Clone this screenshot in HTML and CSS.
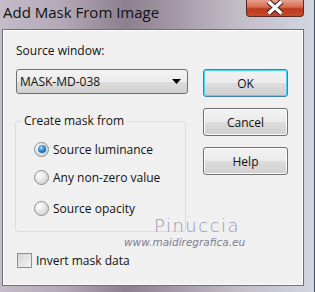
FILE: index.html
```html
<!DOCTYPE html>
<html>
<head>
<meta charset="utf-8">
<link rel="stylesheet" href="styles.css">
</head>
<body>
<div class="window">
  <div class="titlebar">
    <div class="title">Add Mask From Image</div>
    <div class="close"><svg width="20" height="15" viewBox="0 0 20 15"><path d="M3.5 1.5 L16.5 13.5 M16.5 1.5 L3.5 13.5" stroke="#3e2622" stroke-width="5.5"/><path d="M3.5 1.5 L16.5 13.5 M16.5 1.5 L3.5 13.5" stroke="#ffffff" stroke-width="3.2"/></svg></div>
  </div>
  <div class="panel">
    <div class="left">
      <div class="label">Source window:</div>
      <div class="select"><span>MASK-MD-038</span><svg class="arrow" width="9" height="5" viewBox="0 0 9 5"><path d="M0 0 H9 L4.5 5 Z" fill="#000"/></svg></div>
      <fieldset class="group">
        <legend>Create mask from</legend>
        <div class="opt o1"><span class="radio checked"></span>Source luminance</div>
        <div class="opt o2"><span class="radio"></span>Any non-zero value</div>
        <div class="opt o3"><span class="radio"></span>Source opacity</div>
      </fieldset>
      <div class="check"><span class="box"></span>Invert mask data</div>
    </div>
    <div class="right">
      <div class="btn default">OK</div>
      <div class="btn">Cancel</div>
      <div class="btn">Help</div>
    </div>
    <div class="wm1">Pinuccia</div>
    <div class="wm2">www.maidiregrafica.eu</div>
  </div>
</div>
</body>
</html>
```
FILE: styles.css
```css
html, body { margin: 0; padding: 0; }
body {
  width: 315px; height: 292px; overflow: hidden;
  font-family: "Open Sans", "Noto Sans", sans-serif;
  background: linear-gradient(90deg, #6e5563 0%, #7a5a68 40%, #8aa4c4 75%, #9fc0e0 100%);
}
.window {
  width: 315px; height: 292px;
  display: flex; flex-direction: column;
  background:
    linear-gradient(90deg, #c4bcc8 0%, #b4a8b6 20%, #8c7f8e 40%, #a397a6 55%, #c0bcc6 75%, #d2d6e0 100%);
  border-right: 1px solid #40505e;
  box-sizing: border-box;
}
.titlebar {
  height: 29px; flex: none;
  display: flex; justify-content: space-between; align-items: flex-start;
}
.title {
  font-size: 15px; color: #111; padding: 2px 0 0 3px; line-height: 20px;
}
.close {
  width: 58px; height: 17px; margin-right: 10px;
  background: linear-gradient(180deg, #e7a08f 0%, #d5694f 45%, #bc3a1e 55%, #c84a2c 100%);
  border: 1px solid #5a2a22; border-top: none;
  border-radius: 0 0 4px 4px;
  box-sizing: border-box;
  display: flex; justify-content: center; align-items: flex-start;
}
.panel {
  position: relative;
  margin: 0 10px 0 2px;
  height: 257px; flex: none;
  background: #f0f0f0;
  border: 1px solid #6f6f78;
  box-shadow: inset 0 0 0 1px #ffffff;
  box-sizing: border-box;
  display: flex;
  padding: 13px 0 0 13px;
  font-size: 12px; color: #111;
}
.left { width: 172px; display: flex; flex-direction: column; }
.label { line-height: 16px; height: 16px; }
.select {
  margin-top: 10px; height: 25px; box-sizing: border-box;
  border: 1px solid #707070; border-radius: 3px;
  background: linear-gradient(180deg, #f3f3f3 0%, #ebebeb 50%, #dddddd 51%, #cfcfcf 100%);
  display: flex; align-items: center; justify-content: space-between;
  padding: 0 6px 0 3px;
}
.group {
  margin: 20px 0 0 -1px; padding: 0; width: 171px; height: 118px;
  box-sizing: border-box;
  border: 1px solid #d5dfe5; border-radius: 3px;
}
.group legend { margin-left: 5px; padding: 0 3px; line-height: 14px; }
.opt { display: flex; align-items: center; height: 20px; }
.o1 { margin-top: 11px; }
.o2 { margin-top: 8px; }
.o3 { margin-top: 11px; }
.radio {
  width: 15px; height: 15px; border-radius: 50%;
  box-sizing: border-box;
  border: 1px solid #8e8f8f;
  background: radial-gradient(circle at 35% 35%, #ffffff 0%, #e8e8e8 40%, #c4c4c4 100%);
  margin: 0 4px 0 18px;
  display: flex; justify-content: center; align-items: center;
}
.radio.checked::after {
  content: ""; width: 8px; height: 8px; border-radius: 50%;
  background: radial-gradient(circle at 40% 35%, #a9e3ff 0%, #2a8ad0 45%, #0b3f73 100%);
}
.check { display: flex; align-items: center; margin-top: 20px; }
.box {
  width: 15px; height: 15px; box-sizing: border-box;
  border: 1px solid #8e8f8f;
  background: linear-gradient(135deg, #d4d4d4 0%, #f4f4f4 100%);
  margin: 0 4px 0 1px;
}
.right {
  margin-left: 15px; padding-top: 26px;
  display: flex; flex-direction: column; gap: 11px;
}
.btn {
  width: 85px; height: 28px; box-sizing: border-box;
  border: 1px solid #707070; border-radius: 3px;
  background: linear-gradient(180deg, #f2f2f2 0%, #ebebeb 50%, #dddddd 51%, #cfcfcf 100%);
  box-shadow: inset 0 0 0 1px #fcfcfc;
  display: flex; justify-content: center; align-items: center;
  font-size: 12px;
}
.btn.default {
  border-color: #3c7fb1;
  box-shadow: inset 0 0 0 1px #48d8fb;
}
.wm1 {
  position: absolute; left: 151px; top: 185px;
  font-family: "DejaVu Sans", sans-serif; font-size: 18px; letter-spacing: 1.5px; line-height: 22px;
  color: #9a98b4; font-weight: 300;
}
.wm2 {
  position: absolute; left: 121px; top: 206px;
  font-family: "DejaVu Sans", sans-serif; font-style: italic; font-size: 10.5px; line-height: 12px;
  color: #7f7d94;
}
```
